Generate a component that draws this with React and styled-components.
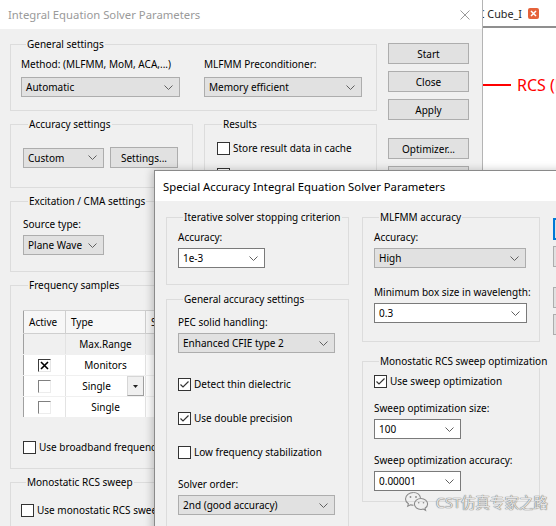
import React from 'react';
import styled, { createGlobalStyle } from 'styled-components';

const GlobalStyle = createGlobalStyle`
  html, body {
    margin: 0;
    padding: 0;
    background: #fff;
  }
  body {
    font-family: "Noto Sans", "Open Sans", sans-serif;
    font-size: 10px;
    color: #000;
  }
`;

const Desktop = styled.div`
  position: relative;
  width: 556px;
  height: 526px;
  overflow: hidden;
  background: #fff;
`;

/* the CST main window behind the dialogs */
const Backdrop = styled.div`
  display: flex;
  flex-direction: column;
  height: 100%;
`;

const TabStrip = styled.div`
  height: 26px;
  display: flex;
  justify-content: flex-end;
  align-items: center;
  padding-right: 17px;
  border-bottom: 2px solid #8f8f8f;
`;

const Tab = styled.div`
  display: flex;
  align-items: center;
  gap: 6px;
  font-size: 10.8px;
  color: #1e1e1e;
  white-space: nowrap;
`;

const TabClose = styled.span`
  width: 11px;
  height: 11px;
  border-radius: 2px;
  background: #e5623a;
  display: flex;
  align-items: center;
  justify-content: center;
`;

const Plot = styled.div`
  flex: 1;
  padding: 46px 0 0 480px;
`;

const PlotLegend = styled.div`
  display: flex;
  align-items: center;
  gap: 6px;
  height: 22px;
  color: #ff0000;
  font-size: 16px;
  white-space: nowrap;
`;

const LegendLine = styled.span`
  flex: none;
  width: 31px;
  height: 2px;
  background: #ff0000;
`;

/* dialog windows */
const Window = styled.section`
  position: absolute;
  left: ${p => p.$x}px;
  top: ${p => p.$y}px;
  width: ${p => p.$w}px;
  height: ${p => p.$h}px;
  display: flex;
  flex-direction: column;
  background: #f0f0f0;
  border: 1px solid ${p => (p.$active ? '#8a8a8a' : '#b4b4b4')};
  box-shadow: ${p => (p.$active ? '-2px 0 8px rgba(0, 0, 0, 0.22)' : 'none')};
`;

const TitleBar = styled.header`
  flex: none;
  height: ${p => p.$h}px;
  display: flex;
  align-items: center;
  justify-content: space-between;
  padding: 0 12px 0 ${p => p.$indent}px;
  background: #fff;
`;

const Title = styled.span`
  font-size: 11.3px;
  color: ${p => (p.$active ? '#000' : '#9a9a9a')};
  white-space: nowrap;
`;

const Body = styled.div`
  display: flex;
  align-items: flex-start;
  gap: ${p => p.$gap}px;
  padding: ${p => p.$pad};
`;

const Column = styled.div`
  flex: none;
  width: ${p => p.$w}px;
  display: flex;
  flex-direction: column;
  gap: ${p => p.$gap}px;
`;

const Row = styled.div`
  display: flex;
  align-items: ${p => p.$align || 'stretch'};
  gap: ${p => p.$gap}px;
`;

const Group = styled.fieldset`
  box-sizing: border-box;
  margin: 0;
  min-width: 0;
  flex: ${p => (p.$grow ? '1 1 0' : 'none')};
  width: ${p => (p.$w ? `${p.$w}px` : 'auto')};
  padding: ${p => p.$pad};
  border: 1px solid #dcdcdc;
  display: flex;
  flex-direction: column;
`;

const Legend = styled.legend`
  margin-left: 5px;
  padding: 0 1px;
  line-height: 14px;
  white-space: nowrap;
`;

const Field = styled.div`
  display: flex;
  flex-direction: column;
  gap: ${p => p.$gap || 4}px;
  margin-top: ${p => p.$mt || 0}px;
`;

const Label = styled.span`
  line-height: 14px;
  white-space: nowrap;
`;

const ComboBox = styled.div`
  box-sizing: border-box;
  flex: none;
  width: ${p => p.$w}px;
  height: 20px;
  display: flex;
  align-items: center;
  justify-content: space-between;
  padding: 0 6px 0 4px;
  background: ${p => (p.$edit ? '#fff' : '#e1e1e1')};
  border: 1px solid ${p => (p.$edit ? '#7a7a7a' : '#adadad')};
  white-space: nowrap;
`;

const PushButton = styled.button`
  box-sizing: border-box;
  flex: none;
  width: ${p => p.$w || 81}px;
  height: ${p => p.$h || 21}px;
  margin-top: ${p => p.$mt || 0}px;
  padding: 0;
  font: inherit;
  color: #000;
  background: #e1e1e1;
  border: 1px solid ${p => (p.$default ? '#0078d7' : '#adadad')};
  box-shadow: ${p => (p.$default ? 'inset 0 0 0 1px #0078d7' : 'none')};
  white-space: nowrap;
`;

const ButtonColumn = styled.div`
  flex: none;
  display: flex;
  flex-direction: column;
  padding-top: ${p => p.$top}px;
`;

const CheckRow = styled.label`
  display: flex;
  align-items: center;
  gap: 3px;
  height: 14px;
  line-height: 14px;
  margin-top: ${p => p.$mt || 0}px;
  white-space: nowrap;
`;

const Box = styled.span`
  box-sizing: border-box;
  flex: none;
  width: 13px;
  height: 13px;
  display: flex;
  align-items: center;
  justify-content: center;
  background: #fff;
  border: 1px solid #333;
`;

/* frequency sample grid */
const SampleTable = styled.table`
  border-collapse: collapse;
  table-layout: fixed;
  width: 250px;
  font: inherit;
  border-left: 1px solid #a0a0a0;
  border-bottom: 1px solid #a0a0a0;
`;

const HeadCell = styled.th`
  box-sizing: border-box;
  width: ${p => p.$w}px;
  height: 23px;
  padding: 0 5px;
  text-align: left;
  font-weight: normal;
  background: #f7f7f7;
  border-top: 1px solid #cfcfcf;
  border-right: 1px solid #cfcfcf;
  border-bottom: 1px solid #cfcfcf;
  white-space: nowrap;
`;

const Cell = styled.td`
  box-sizing: border-box;
  height: 21px;
  padding: 0;
  text-align: center;
  background: ${p => (p.$shade ? '#f0f0f0' : '#fff')};
  border-right: 1px solid #e3e3e3;
  border-bottom: 1px solid #f0f0f0;
  white-space: nowrap;
`;

const CellInner = styled.div`
  display: flex;
  align-items: center;
  justify-content: center;
  height: 100%;
`;

const CellText = styled.span`
  flex: 1;
  text-align: center;
`;

const DropStub = styled.span`
  box-sizing: border-box;
  width: 17px;
  height: 20px;
  margin-right: 1px;
  display: flex;
  align-items: center;
  justify-content: center;
  background: #f0f0f0;
  border: 1px solid #d6d6d6;
  border-right-color: #a0a0a0;
  border-bottom-color: #a0a0a0;
`;

const OldBox = styled.span`
  box-sizing: border-box;
  display: inline-flex;
  align-items: center;
  justify-content: center;
  width: 13px;
  height: 13px;
  background: #fff;
  border: 1px solid;
  border-color: ${p => (p.$checked ? '#3c3c3c #e6e6e6 #e6e6e6 #3c3c3c' : '#808080 #ececec #ececec #808080')};
`;

/* watermark over the screenshot */
const Watermark = styled.div`
  position: absolute;
  right: 8px;
  bottom: 14px;
  display: flex;
  align-items: center;
  gap: 6px;
  font-family: "Noto Sans", "Noto Sans CJK SC", sans-serif;
  font-size: 14.5px;
  color: #e4e4e4;
  text-shadow: 0 0 1px #6e6e6e, 0 0 1px #6e6e6e;
  white-space: nowrap;
`;

function Chevron() {
  return (
    <svg width="9" height="5" viewBox="0 0 9 5">
      <polyline points="0.5,0.5 4.5,4.5 8.5,0.5" fill="none" stroke="#606060" strokeWidth="1" />
    </svg>
  );
}

function Combo({ w, edit, children }) {
  return (
    <ComboBox $w={w} $edit={edit}>
      <span>{children}</span>
      <Chevron />
    </ComboBox>
  );
}

function Check({ checked, mt, children }) {
  return (
    <CheckRow $mt={mt}>
      <Box>
        {checked && (
          <svg width="11" height="11" viewBox="0 0 11 11">
            <polyline points="1.5,5.5 4,8 9.5,2.5" fill="none" stroke="#333" strokeWidth="1.2" />
          </svg>
        )}
      </Box>
      {children}
    </CheckRow>
  );
}

function GridCheck({ checked }) {
  return (
    <OldBox $checked={checked}>
      {checked && (
        <svg width="11" height="11" viewBox="0 0 11 11">
          <path d="M2 2 L9 9 M9 2 L2 9" stroke="#000" strokeWidth="1.6" />
        </svg>
      )}
    </OldBox>
  );
}

function CloseGlyph({ color }) {
  return (
    <svg width="10" height="10" viewBox="0 0 10 10">
      <path d="M0.5 0.5 L9.5 9.5 M9.5 0.5 L0.5 9.5" stroke={color} strokeWidth="1" />
    </svg>
  );
}

function WeChatMark() {
  return (
    <svg width="27" height="21" viewBox="0 0 24 21" fill="none" stroke="#8a8a8a" strokeWidth="1.1">
      <path d="M9 1.5c-4.4 0-8 2.9-8 6.4 0 2 1.1 3.7 2.9 4.9l-0.7 2.4 2.8-1.4c1 0.3 2 0.5 3 0.5" />
      <path d="M16.5 7.5c-3.7 0-6.6 2.5-6.6 5.5s2.9 5.5 6.6 5.5c0.8 0 1.6-0.1 2.3-0.4l2.3 1.2-0.6-2c1.6-1 2.6-2.6 2.6-4.3 0-3-3-5.5-6.6-5.5z" />
      <path d="M16 6.8c-0.6-3-3.5-5.3-7-5.3" />
      <circle cx="6" cy="6" r="0.9" fill="#8a8a8a" stroke="none" />
      <circle cx="11.5" cy="6" r="0.9" fill="#8a8a8a" stroke="none" />
      <circle cx="14.2" cy="11.8" r="0.8" fill="#8a8a8a" stroke="none" />
      <circle cx="19" cy="11.8" r="0.8" fill="#8a8a8a" stroke="none" />
    </svg>
  );
}

const samples = [
  { type: 'Max.Range', shade: true },
  { type: 'Monitors', active: true, checked: true },
  { type: 'Single', active: true, drop: true },
  { type: 'Single', active: true }
];

function MainDialog() {
  return (
    <Window $x={-1} $y={-1} $w={482} $h={620}>
      <TitleBar $h={29} $indent={8}>
        <Title>Integral Equation Solver Parameters</Title>
        <CloseGlyph color="#9a9a9a" />
      </TitleBar>
      <Body $pad="8px 11px 0 10px" $gap={11}>
        <Column $w={367} $gap={6}>
          <Group $pad="6px 14px 13px 10px">
            <Legend>General settings</Legend>
            <Row $gap={24}>
              <Field $gap={6}>
                <Label>Method: (MLFMM, MoM, ACA,...)</Label>
                <Combo w={159}>Automatic</Combo>
              </Field>
              <Field $gap={6}>
                <Label>MLFMM Preconditioner:</Label>
                <Combo w={158}>Memory efficient</Combo>
              </Field>
            </Row>
          </Group>

          <Row $gap={11}>
            <Group $w={183} $pad="16px 12px 19px 12px">
              <Legend>Accuracy settings</Legend>
              <Row $gap={6} $align="center">
                <Combo w={81}>Custom</Combo>
                <PushButton $w={68}>Settings...</PushButton>
              </Row>
            </Group>
            <Group $grow $pad="10px 8px 6px 12px">
              <Legend>Results</Legend>
              <Check>Store result data in cache</Check>
              <Check mt={12}>Calculate currents and mesh</Check>
            </Group>
          </Row>

          <Group $pad="9px 12px 16px 12px">
            <Legend>Excitation / CMA settings</Legend>
            <Field>
              <Label>Source type:</Label>
              <Combo w={81}>Plane Wave</Combo>
            </Field>
          </Group>

          <Group $pad="18px 12px 14px 12px">
            <Legend>Frequency samples</Legend>
            <SampleTable>
              <thead>
                <tr>
                  <HeadCell $w={42}>Active</HeadCell>
                  <HeadCell $w={80}>Type</HeadCell>
                  <HeadCell $w={128}>Samples</HeadCell>
                </tr>
              </thead>
              <tbody>
                {samples.map((s, i) => (
                  <tr key={i}>
                    <Cell $shade={s.shade}>
                      <CellInner>{s.active && <GridCheck checked={s.checked} />}</CellInner>
                    </Cell>
                    <Cell $shade={s.shade}>
                      <CellInner>
                        <CellText>{s.type}</CellText>
                        {s.drop && (
                          <DropStub>
                            <svg width="5" height="3" viewBox="0 0 5 3">
                              <path d="M0 0 H5 L2.5 3 Z" fill="#222" />
                            </svg>
                          </DropStub>
                        )}
                      </CellInner>
                    </Cell>
                    <Cell $shade={s.shade} />
                  </tr>
                ))}
              </tbody>
            </SampleTable>
            <Check mt={22}>Use broadband frequency sweep</Check>
          </Group>

          <Group $pad="14px 12px 14px 10px">
            <Legend>Monostatic RCS sweep</Legend>
            <Check>Use monostatic RCS sweep</Check>
          </Group>
        </Column>

        <ButtonColumn $top={6}>
          <PushButton>Start</PushButton>
          <PushButton $mt={7}>Close</PushButton>
          <PushButton $mt={7}>Apply</PushButton>
          <PushButton $mt={18}>Optimizer...</PushButton>
          <PushButton $mt={7}>Specials...</PushButton>
        </ButtonColumn>
      </Body>
    </Window>
  );
}

function AccuracyDialog() {
  return (
    <Window $active $x={154} $y={170} $w={430} $h={420}>
      <TitleBar $h={30} $indent={8}>
        <Title $active>Special Accuracy Integral Equation Solver Parameters</Title>
      </TitleBar>
      <Body $pad="9px 0 0 11px" $gap={13}>
        <Column $w={183} $gap={7}>
          <Group $pad="6px 10px 16px 11px">
            <Legend>Iterative solver stopping criterion</Legend>
            <Field>
              <Label>Accuracy:</Label>
              <Combo w={87} edit>1e-3</Combo>
            </Field>
          </Group>
          <Group $pad="9px 10px 12px 11px">
            <Legend>General accuracy settings</Legend>
            <Field>
              <Label>PEC solid handling:</Label>
              <Combo w={157}>Enhanced CFIE type 2</Combo>
            </Field>
            <Check checked mt={24}>Detect thin dielectric</Check>
            <Check checked mt={20}>Use double precision</Check>
            <Check mt={20}>Low frequency stabilization</Check>
            <Field $mt={18}>
              <Label>Solver order:</Label>
              <Combo w={157}>2nd (good accuracy)</Combo>
            </Field>
          </Group>
        </Column>

        <Column $w={178} $gap={12}>
          <Group $pad="6px 10px 18px 11px">
            <Legend>MLFMM accuracy</Legend>
            <Field>
              <Label>Accuracy:</Label>
              <Combo w={152}>High</Combo>
            </Field>
            <Field $mt={17}>
              <Label>Minimum box size in wavelength:</Label>
              <Combo w={153} edit>0.3</Combo>
            </Field>
          </Group>
          <Group $pad="6px 10px 10px 11px">
            <Legend>Monostatic RCS sweep optimization</Legend>
            <Check checked>Use sweep optimization</Check>
            <Field $mt={13}>
              <Label>Sweep optimization size:</Label>
              <Combo w={87} edit>100</Combo>
            </Field>
            <Field $mt={14}>
              <Label>Sweep optimization accuracy:</Label>
              <Combo w={87} edit>0.00001</Combo>
            </Field>
          </Group>
        </Column>

        <ButtonColumn $top={8}>
          <PushButton $default $h={22}>OK</PushButton>
          <PushButton $mt={6}>Cancel</PushButton>
          <PushButton $mt={20}>Apply</PushButton>
          <PushButton $mt={6}>Help</PushButton>
        </ButtonColumn>
      </Body>
    </Window>
  );
}

export default function App() {
  return (
    <>
      <GlobalStyle />
      <Desktop>
        <Backdrop>
          <TabStrip>
            <Tab>
              PEC Cube_I
              <TabClose>
                <svg width="7" height="7" viewBox="0 0 7 7">
                  <path d="M1 1 L6 6 M6 1 L1 6" stroke="#fff" strokeWidth="1.5" />
                </svg>
              </TabClose>
            </Tab>
          </TabStrip>
          <Plot>
            <PlotLegend>
              <LegendLine />
              RCS (Farfield)
            </PlotLegend>
          </Plot>
        </Backdrop>

        <MainDialog />
        <AccuracyDialog />

        <Watermark>
          <WeChatMark />
          CST仿真专家之路
        </Watermark>
      </Desktop>
    </>
  );
}
